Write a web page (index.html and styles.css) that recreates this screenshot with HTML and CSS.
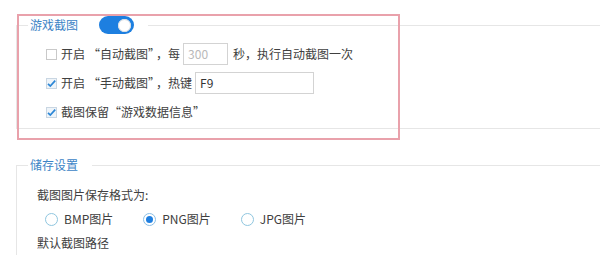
FILE: index.html
```html
<!DOCTYPE html>
<html lang="zh-CN">
<head>
<meta charset="utf-8">
<link rel="stylesheet" href="styles.css">
</head>
<body>
<div class="page">
  <fieldset class="group game">
    <legend class="legend"><span class="legend-text">游戏截图</span><span class="toggle"><span class="knob"></span></span></legend>
    <div class="rows">
      <div class="row">
        <span class="cb"></span>
        <span class="label">开启<span class="qo">“</span>自动截图”<span class="cm">，</span>每</span>
        <span class="input short">300</span>
        <span class="label after">秒，执行自动截图一次</span>
      </div>
      <div class="row">
        <span class="cb checked"><svg viewBox="0 0 11 11" width="11" height="11"><path d="M2 5.8 L4.3 8 L9.2 2.6" fill="none" stroke="#2a86d6" stroke-width="1.7"/></svg></span>
        <span class="label">开启<span class="qo">“</span>手动截图”<span class="cm">，</span>热键</span>
        <span class="input long">F9</span>
      </div>
      <div class="row">
        <span class="cb checked"><svg viewBox="0 0 11 11" width="11" height="11"><path d="M2 5.8 L4.3 8 L9.2 2.6" fill="none" stroke="#2a86d6" stroke-width="1.7"/></svg></span>
        <span class="label">截图保留“游戏数据信息”</span>
      </div>
    </div>
  </fieldset>

  <fieldset class="group storage">
    <legend class="legend"><span class="legend-text">储存设置</span></legend>
    <div class="rows tight">
      <div class="row"><span class="label">截图图片保存格式为:</span></div>
      <div class="row radios">
        <span class="radio-item"><span class="radio"></span><span class="label">BMP图片</span></span>
        <span class="radio-item"><span class="radio on"></span><span class="label">PNG图片</span></span>
        <span class="radio-item"><span class="radio"></span><span class="label">JPG图片</span></span>
      </div>
      <div class="row"><span class="label">默认截图路径</span></div>
    </div>
  </fieldset>

  <div class="highlight"></div>
</div>
</body>
</html>
```

FILE: styles.css
```css
html, body {
  margin: 0;
  padding: 0;
  background: #ffffff;
}
body {
  font-family: "Noto Sans CJK SC", "Noto Sans", sans-serif;
  font-size: 12px;
  color: #404040;
  width: 600px;
  height: 263px;
  overflow: hidden;
}
.page {
  position: relative;
  padding-top: 16px;
  height: 247px;
  overflow: hidden;
}
.group {
  margin: 0 0 0 16px;
  border: 1px solid #e6e6e6;
  border-right: none;
  padding: 0 0 0 11px;
  min-width: 0;
}
.game {
  padding-bottom: 5px;
}
.storage {
  margin-top: 27px;
  padding-left: 11px;
  border-bottom: none;
  height: 98px;
}
.legend {
  display: flex;
  align-items: center;
  height: 18px;
  padding: 0 14px 0 2px;
  margin-left: 0;
}
.legend-text {
  color: #3c84c6;
  line-height: 18px;
}
.toggle {
  position: relative;
  display: inline-block;
  width: 35px;
  height: 18px;
  border-radius: 9px;
  background: #1d7fe0;
  margin-left: 21px;
}
.knob {
  position: absolute;
  right: 3px;
  top: 2.5px;
  width: 13px;
  height: 13px;
  border-radius: 50%;
  background: #ffffff;
  box-shadow: inset 0 0 0 1px #d8dde3;
}
.rows {
  display: flex;
  flex-direction: column;
  gap: 7px;
  padding: 9px 0 0 18px;
}
.rows.tight {
  gap: 2px;
  padding: 10px 0 0 9px;
}
.row {
  display: flex;
  align-items: center;
  height: 22px;
  white-space: nowrap;
}
.cb {
  display: inline-flex;
  align-items: center;
  justify-content: center;
  box-sizing: border-box;
  width: 11px;
  height: 11px;
  border: 1px solid #c9c9c9;
  background: #ffffff;
  margin-right: 4px;
}
.cb.checked {
  border-color: #c9d6e2;
  background: #eef4f9;
}
.cb svg {
  display: block;
  flex: none;
  overflow: visible;
}
.label {
  line-height: 22px;
}
.qo {
  margin-left: 3px;
}
.cm {
  margin-left: 2px;
}
.input {
  box-sizing: border-box;
  height: 22px;
  line-height: 20px;
  border: 1px solid #d3d3d3;
  padding-left: 4px;
  margin-left: 3px;
  color: #333;
}
.input.short {
  width: 45px;
  color: #b9b9b9;
}
.input.long {
  width: 119px;
}
.after {
  margin-left: 5px;
}
.radios {
  gap: 0;
}
.radio-item {
  display: inline-flex;
  align-items: center;
  margin-right: 30px;
}
.radio-item:first-child {
  margin-left: 8px;
}
.radio {
  box-sizing: border-box;
  width: 13px;
  height: 13px;
  border-radius: 50%;
  border: 1px solid #8fc6df;
  background: #fff;
  margin-right: 6px;
  position: relative;
}
.radio.on {
  border-color: #8cbfe6;
}
.radio.on::after {
  content: "";
  position: absolute;
  left: 2px;
  top: 2px;
  width: 7px;
  height: 7px;
  border-radius: 50%;
  background: #1f7fe0;
}
.highlight {
  position: absolute;
  left: 17px;
  top: 14px;
  width: 383px;
  height: 126px;
  box-sizing: border-box;
  border: 2px solid #e9a1ab;
  pointer-events: none;
}
```
